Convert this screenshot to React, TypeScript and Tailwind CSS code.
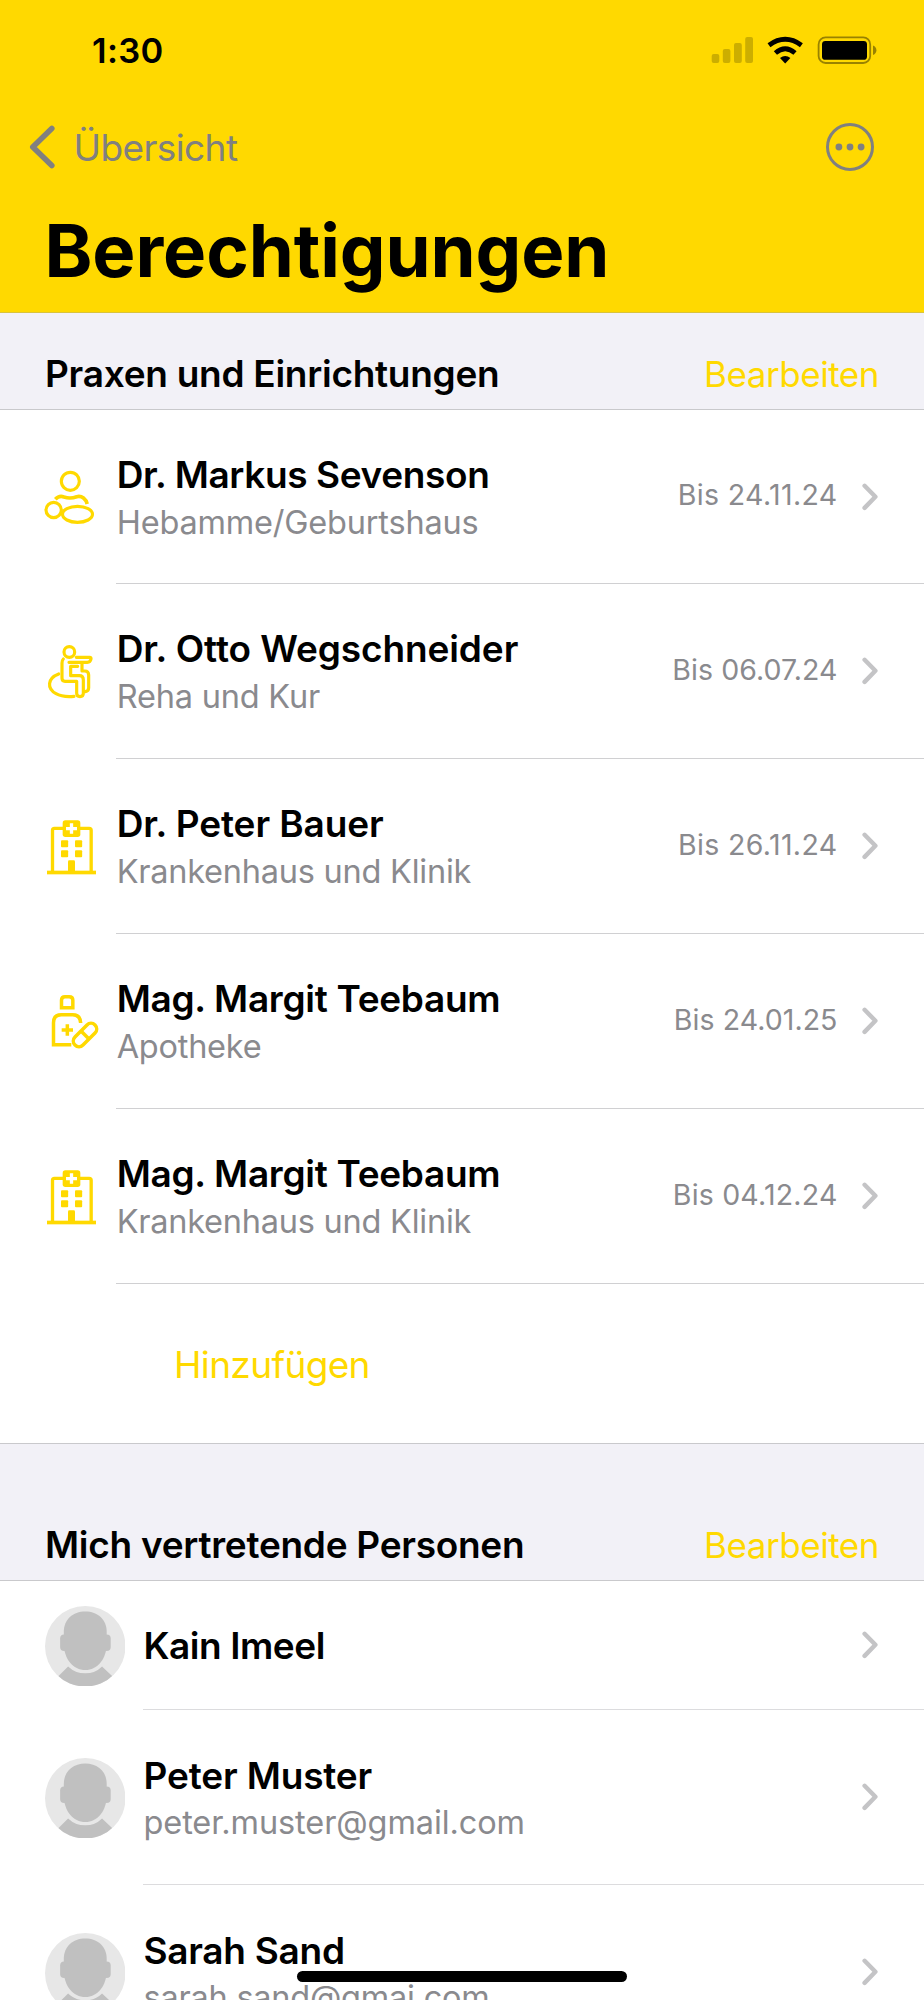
import type { ReactNode } from "react";

type Kind = "midwife" | "rehab" | "hospital" | "pharmacy";

interface Practice {
  name: string;
  nameTracking: string;
  type: string;
  typeTracking: string;
  until: string;
  untilTracking: string;
  kind: Kind;
  height: string;
}

interface Person {
  name: string;
  nameTracking: string;
  mail?: string;
  mailTracking?: string;
}

const practices: Practice[] = [
  {
    name: "Dr. Markus Sevenson",
    nameTracking: "tracking-[-0.37px]",
    type: "Hebamme/Geburtshaus",
    typeTracking: "tracking-[-0.2px]",
    until: "Bis 24.11.24",
    untilTracking: "tracking-[0.35px]",
    kind: "midwife",
    height: "h-[174px]",
  },
  {
    name: "Dr. Otto Wegschneider",
    nameTracking: "tracking-[-0.1px]",
    type: "Reha und Kur",
    typeTracking: "tracking-[-0.2px]",
    until: "Bis 06.07.24",
    untilTracking: "tracking-[0.07px]",
    kind: "rehab",
    height: "h-[175px]",
  },
  {
    name: "Dr. Peter Bauer",
    nameTracking: "tracking-[-0.1px]",
    type: "Krankenhaus und Klinik",
    typeTracking: "tracking-[-0.24px]",
    until: "Bis 26.11.24",
    untilTracking: "tracking-[0.36px]",
    kind: "hospital",
    height: "h-[175px]",
  },
  {
    name: "Mag. Margit Teebaum",
    nameTracking: "tracking-[-0.3px]",
    type: "Apotheke",
    typeTracking: "tracking-[-0.25px]",
    until: "Bis 24.01.25",
    untilTracking: "tracking-[0.06px]",
    kind: "pharmacy",
    height: "h-[175px]",
  },
  {
    name: "Mag. Margit Teebaum",
    nameTracking: "tracking-[-0.3px]",
    type: "Krankenhaus und Klinik",
    typeTracking: "tracking-[-0.24px]",
    until: "Bis 04.12.24",
    untilTracking: "tracking-[0.2px]",
    kind: "hospital",
    height: "h-[175px]",
  },
];

const persons: Person[] = [
  { name: "Kain Imeel", nameTracking: "tracking-[-0.45px]" },
  {
    name: "Peter Muster",
    nameTracking: "tracking-[-0.15px]",
    mail: "peter.muster@gmail.com",
    mailTracking: "tracking-[-0.1px]",
  },
  {
    name: "Sarah Sand",
    nameTracking: "tracking-[-0.27px]",
    mail: "sarah.sand@gmai.com",
    mailTracking: "tracking-[-0.25px]",
  },
];

function StatusIcons() {
  return (
    <svg className="h-[28px] w-[166px]" viewBox="711 36 166 28" fill="none">
      <g fill="#ccae00">
        <rect x="711.7" y="54" width="7.6" height="9" rx="2" />
        <rect x="722.8" y="49" width="7.6" height="14" rx="2" />
        <rect x="734" y="43" width="7.8" height="20" rx="2" />
        <rect x="745.2" y="37" width="7.8" height="26" rx="2" />
      </g>
      <g stroke="#000" strokeWidth="4.9">
        <path d="M769 45.2 Q785.2 33.4 801.4 45.2" />
        <path d="M775.4 53 Q785.2 44.6 795 53" />
      </g>
      <path d="M780 58.1 Q785.2 53.7 790.4 58.1 L785.2 63.4 Z" fill="#000" />
      <rect x="818.6" y="37.4" width="51.6" height="25.6" rx="7" stroke="#998200" strokeWidth="1.8" />
      <rect x="822" y="41" width="45" height="18.8" rx="3.4" fill="#000" />
      <path d="M873 45.6 Q876.4 47 876.4 50.3 Q876.4 53.6 873 55 Z" fill="#998200" />
    </svg>
  );
}

function Chevron() {
  return (
    <svg className="h-[28px] w-[16px] shrink-0" viewBox="0 0 16 28" fill="none">
      <path d="M2.6 2.8 L13.4 13.8 L2.6 24.9" stroke="#c4c4c6" strokeWidth="4.4" strokeLinecap="round" strokeLinejoin="round" />
    </svg>
  );
}

function KindIcon({ kind }: { kind: Kind }) {
  if (kind === "midwife") {
    return (
      <svg className="size-[60px] shrink-0" viewBox="30 51 180 180" fill="none" stroke="#ffd900" strokeWidth="9.5">
        <circle cx="121" cy="94" r="27" />
        <path d="M76 148 C86 137 94 138 102 141 C114 145 127 145 140 140 C156 136 168 147 171.5 162" strokeWidth="11" />
        <circle cx="71" cy="180" r="23" />
        <ellipse cx="142.5" cy="193" rx="45" ry="24" />
      </svg>
    );
  }
  if (kind === "rehab") {
    return (
      <svg className="size-[60px] shrink-0" viewBox="30 35 180 180" fill="none" stroke="#ffd900" strokeWidth="9.5" strokeLinecap="round" strokeLinejoin="round">
        <circle cx="118" cy="65" r="16" />
        <path d="M139 81 H179 Q184 81 183 86 Q181 96 172 96 H117" />
        <path d="M100 86 Q96 90 96 98 V144 Q96 153 105 153 H140 V189 Q140 199 150 199 Q160 199 160 189 V148 Q160 136 148 136 H122 V108 H143" />
        <path d="M156 98 V122 H164 Q176 122 176 134 V172 Q176 182 166 184" />
        <path d="M86 131 C52 144 50 174 78 190 Q97 201 132 198" />
      </svg>
    );
  }
  if (kind === "hospital") {
    return (
      <svg className="size-[60px] shrink-0" viewBox="30 50 180 180" fill="#ffd900">
        <path d="M67.5 214 V90 Q67.5 84 73.5 84 H177.5 Q183.5 84 183.5 90 V214" fill="none" stroke="#ffd900" strokeWidth="10" />
        <rect x="51" y="211" width="147" height="11" />
        <rect x="98" y="60" width="53" height="50" rx="8" />
        <path d="M119.5 69 H129.5 V80 H141 V90 H129.5 V100 H119.5 V90 H108 V80 H119.5 Z" fill="#fff" />
        <rect x="93" y="120" width="21.5" height="21" rx="3" />
        <rect x="135" y="120" width="21.5" height="21" rx="3" />
        <rect x="93" y="150" width="21.5" height="21" rx="3" />
        <rect x="135" y="150" width="21.5" height="21" rx="3" />
        <path d="M114 214 V184 Q114 180 118 180 H131 Q135 180 135 184 V214 Z" />
      </svg>
    );
  }
  return (
    <svg className="size-[60px] shrink-0" viewBox="30 35 180 180" fill="none" stroke="#ffd900" strokeWidth="10.5">
      <path d="M94.5 82 V60 Q94.5 49 105 49 H117.5 Q128.5 49 128.5 60 V82 Z" />
      <path d="M124 193.5 H70.5 V127 Q70.5 103 94 103 H128 Q151 103 152 128" />
      <path d="M95 149 H129 M112 132 V166" />
      <g transform="rotate(-45 165 164)">
        <rect x="122.5" y="147" width="85" height="34" rx="17" />
        <path d="M165 146 V182" />
      </g>
    </svg>
  );
}

function Avatar() {
  return (
    <svg className="size-[80.5px] shrink-0" viewBox="133.5 45.5 242 242">
      <defs>
        <clipPath id="disc">
          <circle cx="254.5" cy="166.5" r="121" />
        </clipPath>
      </defs>
      <circle cx="254.5" cy="166.5" r="121" fill="#e7e7e7" />
      <g fill="#c0c0c0" clipPath="url(#disc)">
        <path d="M190 124 C190 86 217 62 254.5 62 C292 62 319 86 319 124 V158 C319 204 291 238 254.5 238 C218 238 190 204 190 158 Z" />
        <rect x="179" y="131" width="24" height="50" rx="12" />
        <rect x="307" y="131" width="24" height="50" rx="12" />
        <path d="M203 227 L166 264 L200 300 H310 L344 264 L305 227 Q284 248 254.5 248 Q225 248 203 227 Z" />
      </g>
    </svg>
  );
}

function SectionHeader({ height, children }: { height: string; children: ReactNode }) {
  return (
    <div className={`flex items-end border-b border-[#c9c9cc] bg-[#f2f1f7] pr-[45px] pb-[12px] pl-[45px] ${height}`}>
      <div className="flex w-full items-baseline justify-between">
        {children}
        <button className="text-[35px] leading-[46px] tracking-[-0.45px] text-[#ffd900]">Bearbeiten</button>
      </div>
    </div>
  );
}

function PracticeRow({ item }: { item: Practice }) {
  return (
    <li className={`flex gap-4 pl-10 ${item.height}`}>
      <div className="flex items-center">
        <KindIcon kind={item.kind} />
      </div>
      <div className="flex flex-1 border-b border-[#d0d0d2] pr-[46px]">
        <div className="flex-1 pt-[41px] pl-[0.7px]">
          <p className={`text-[37px] leading-[47px] font-semibold whitespace-nowrap text-black ${item.nameTracking}`}>{item.name}</p>
          <p className={`text-[32.5px] leading-[49px] whitespace-nowrap text-[#8a8a8e] ${item.typeTracking}`}>{item.type}</p>
        </div>
        <div className="flex items-center gap-[24.5px]">
          <span className={`pb-[3px] text-[28.5px] leading-[36px] whitespace-nowrap text-[#8a8a8e] ${item.untilTracking}`}>{item.until}</span>
          <Chevron />
        </div>
      </div>
    </li>
  );
}

function PersonRow({ item }: { item: Person }) {
  return (
    <li className={`flex gap-[18px] pl-[44.5px] ${item.mail ? "h-[175px]" : "h-[129px]"}`}>
      <div className="flex items-center pt-px">
        <Avatar />
      </div>
      <div className="flex flex-1 items-center border-b border-[#dcdcde] pr-[46px]">
        <div className={`flex-1 pl-[0.5px] ${item.mail ? "pt-[4px]" : ""}`}>
          <p className={`text-[37px] leading-[47px] font-semibold whitespace-nowrap text-black ${item.nameTracking}`}>{item.name}</p>
          {item.mail && (
            <p className={`text-[32.5px] leading-[48px] whitespace-nowrap text-[#8a8a8e] ${item.mailTracking}`}>{item.mail}</p>
          )}
        </div>
        <Chevron />
      </div>
    </li>
  );
}

export default function App() {
  return (
    <div className="relative h-[2000px] w-[924px] overflow-hidden bg-white font-['Inter',sans-serif]">
      <header className="h-[313px] border-b border-[#d9c33c] bg-[#ffd900]">
        <div className="flex h-[100px] items-center justify-between pr-[47px] pl-[92px]">
          <span className="pt-[2px] text-[34.5px] leading-[40px] font-semibold tracking-[0.3px] text-black">1:30</span>
          <StatusIcons />
        </div>
        <div className="flex h-[94px] items-center justify-between pr-[49px] pl-[29px]">
          <button className="flex items-center gap-[17.5px]">
            <svg className="h-[44px] w-[27px]" viewBox="0 0 27 44" fill="none">
              <path d="M22.8 3.500 L3.8 22 L22.8 40.500" stroke="#808080" strokeWidth="5.6" strokeLinecap="round" strokeLinejoin="round" />
            </svg>
            <span className="pt-[2px] text-[37px] leading-[46px] tracking-[-0.6px] text-[#808080]">Übersicht</span>
          </button>
          <button aria-label="Mehr">
            <svg className="size-[50px]" viewBox="0 0 50 50" fill="none">
              <circle cx="25" cy="25" r="22.5" stroke="#808080" strokeWidth="3" />
              <g fill="#808080">
                <circle cx="13.9" cy="25" r="3.4" />
                <circle cx="25" cy="25" r="3.4" />
                <circle cx="36.1" cy="25" r="3.4" />
              </g>
            </svg>
          </button>
        </div>
        <h1 className="pt-[17px] pl-[44.5px] text-[72.5px] leading-[80px] font-bold tracking-[-0.1px] text-black">Berechtigungen</h1>
      </header>

      <section>
        <SectionHeader height="h-[97px]">
          <h2 className="text-[37px] leading-[46px] font-semibold tracking-[-0.27px] text-black">Praxen und Einrichtungen</h2>
        </SectionHeader>
        <ul>
          {practices.map((item, index) => (
            <PracticeRow key={index} item={item} />
          ))}
        </ul>
        <div className="flex h-[160px] items-center border-b border-[#c9c9cc] pt-[2px] pl-[174px]">
          <button className="text-[37px] leading-[46px] tracking-[-0.65px] text-[#ffd900]">Hinzufügen</button>
        </div>
      </section>

      <section>
        <SectionHeader height="h-[137px]">
          <h2 className="text-[37px] leading-[46px] font-semibold tracking-[-0.27px] text-black">Mich vertretende Personen</h2>
        </SectionHeader>
        <ul>
          {persons.map((item) => (
            <PersonRow key={item.name} item={item} />
          ))}
        </ul>
      </section>

      <div className="absolute bottom-[18px] left-[297px] h-[11px] w-[330px] rounded-full bg-black" />
    </div>
  );
}
